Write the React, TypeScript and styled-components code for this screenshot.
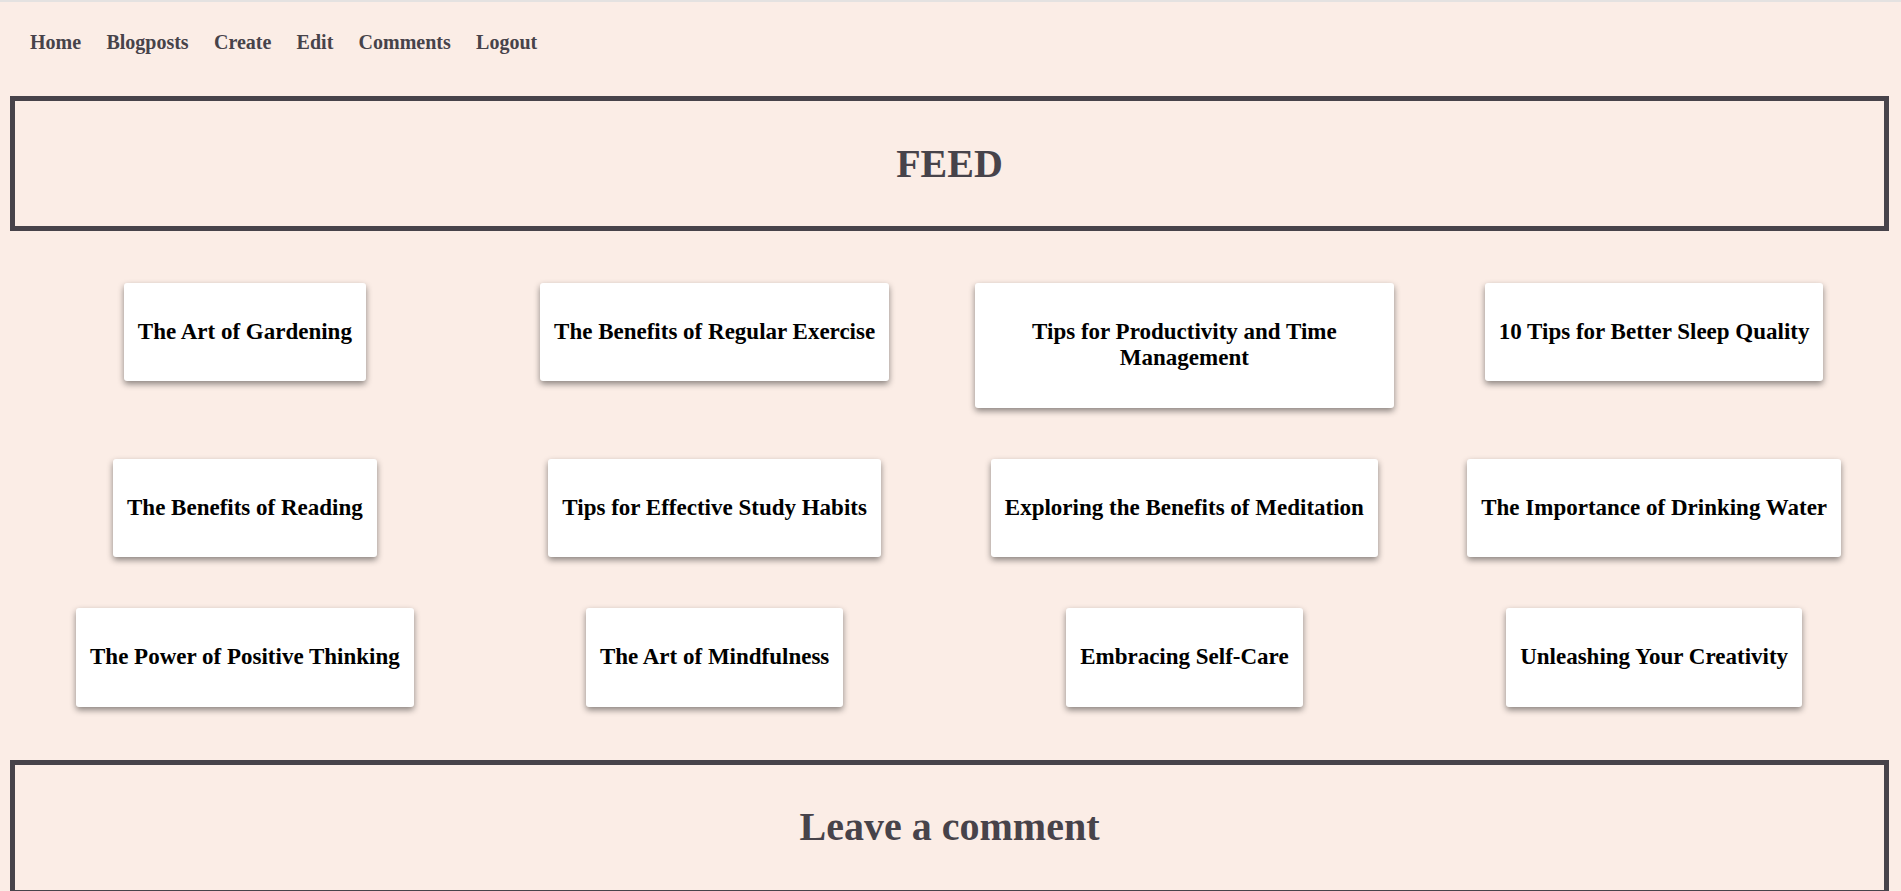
import React from "react";
import styled, { createGlobalStyle } from "styled-components";

const GlobalStyle = createGlobalStyle`
  html, body {
    margin: 0;
    padding: 0;
    background: #fbede6;
  }
  body {
    font-family: "Liberation Serif", "Times New Roman", serif;
  }
  * { box-sizing: border-box; }
`;

const Page = styled.div`
  min-height: 100vh;
  background: #fbede6;
  border-top: 2px solid #e4e2e1;
  padding: 0 12px 40px 10px;
`;

const Nav = styled.nav`
  display: flex;
  gap: 25.3px;
  padding: 29px 0 42px 20px;
`;

const NavLink = styled.a`
  font-family: "Liberation Serif", "Times New Roman", serif;
  font-weight: 700;
  font-size: 20px;
  line-height: 23px;
  color: #47434a;
  text-decoration: none;
  cursor: pointer;
`;

const TitleBox = styled.section`
  display: flex;
  align-items: center;
  justify-content: center;
  height: 135px;
  border: 5px solid #47434a;
`;

const Title = styled.h1`
  margin: 0;
  font-family: "Liberation Serif", "Times New Roman", serif;
  font-weight: 700;
  font-size: 40px;
  line-height: 1.15;
  color: #47434a;
`;

const Grid = styled.div`
  display: grid;
  grid-template-columns: repeat(4, 1fr);
  align-items: start;
  row-gap: 1px;
  padding: 27px 0 28px;
`;

const Card = styled.article`
  justify-self: center;
  margin: 25px;
  padding: 36px 14px;
  background: #ffffff;
  border-radius: 3px;
  box-shadow: 0 3px 6px rgba(0, 0, 0, 0.45);
  text-align: center;
  cursor: pointer;
`;

const CardTitle = styled.h2`
  margin: 0;
  font-family: "Liberation Serif", "Times New Roman", serif;
  font-weight: 700;
  font-size: 23px;
  line-height: 1.15;
  color: #000;
`;

const links = ["Home", "Blogposts", "Create", "Edit", "Comments", "Logout"];

const posts = [
  "The Art of Gardening",
  "The Benefits of Regular Exercise",
  "Tips for Productivity and Time Management",
  "10 Tips for Better Sleep Quality",
  "The Benefits of Reading",
  "Tips for Effective Study Habits",
  "Exploring the Benefits of Meditation",
  "The Importance of Drinking Water",
  "The Power of Positive Thinking",
  "The Art of Mindfulness",
  "Embracing Self-Care",
  "Unleashing Your Creativity",
];

export default function App() {
  return (
    <>
      <GlobalStyle />
      <Page>
        <Nav>
          {links.map((l) => (
            <NavLink key={l}>{l}</NavLink>
          ))}
        </Nav>
        <TitleBox>
          <Title>FEED</Title>
        </TitleBox>
        <Grid>
          {posts.map((p) => (
            <Card key={p}>
              <CardTitle>{p}</CardTitle>
            </Card>
          ))}
        </Grid>
        <TitleBox>
          <Title>Leave a comment</Title>
        </TitleBox>
      </Page>
    </>
  );
}
